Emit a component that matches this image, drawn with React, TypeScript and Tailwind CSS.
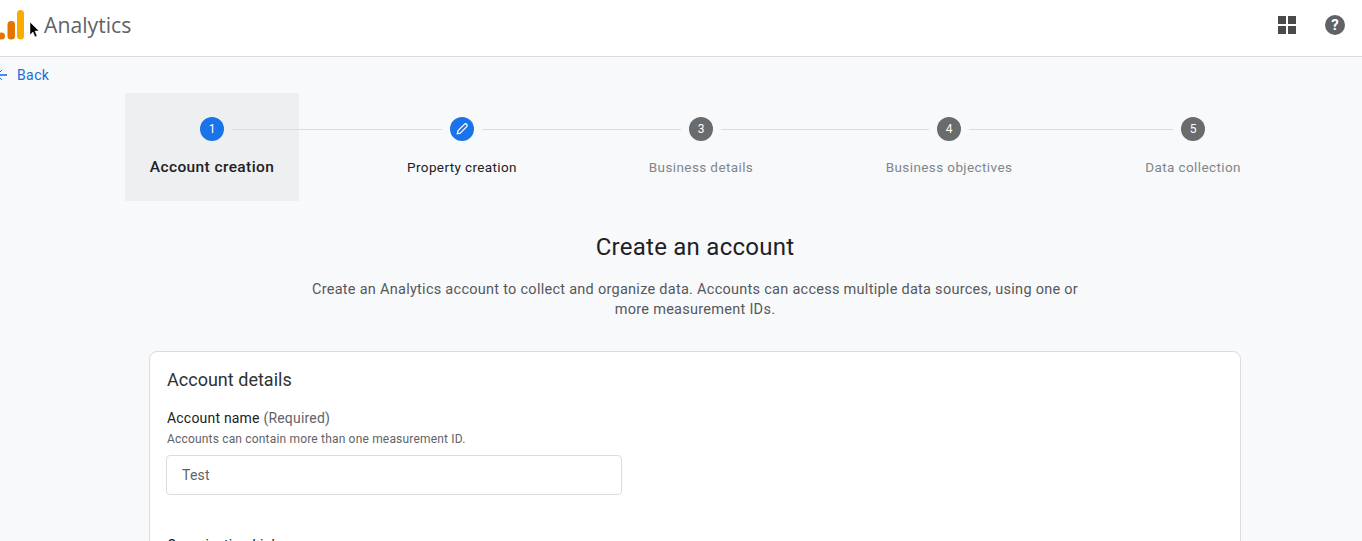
import type { ReactNode } from "react";

function Step({ mark, label, kind, w }: { mark: ReactNode; label: string; kind: "active" | "edit" | "todo"; w: string }) {
  const labelClass =
    kind === "active"
      ? "text-[15.5px] font-medium text-[#202124] tracking-[0.4px]"
      : kind === "edit"
        ? "text-[13.5px] text-[#202124] tracking-[0.38px]"
        : "text-[13.5px] text-[#80868b] tracking-[0.4px]";
  return (
    <div className={`${w} relative z-0 flex flex-col items-center shrink-0 pt-6 h-[108px] ${kind === "active" ? "bg-[#eeeff1]" : ""}`}>
      <div className={`w-6 h-6 rounded-full flex items-center justify-center text-xs text-white ${kind === "todo" ? "bg-[#6a6b6d]" : "bg-[#1a73e8]"}`}>{mark}</div>
      <div className={`mt-[16px] leading-5 whitespace-nowrap ${labelClass}`}>{label}</div>
    </div>
  );
}

function Line({ w, extra = "" }: { w: string; extra?: string }) {
  return <div className={`${w} ${extra} relative z-10 h-px bg-[#dadce0] mt-9 shrink-0`} />;
}

export default function App() {
  return (
    <div className="h-[541px] overflow-hidden bg-[#f8f9fb] font-['Roboto',sans-serif]">
      <header className="h-[57px] bg-white border-b border-[#dadce0] flex items-center pb-[6px]">
        <svg width="24" height="30" viewBox="0 0 24 30" className="shrink-0">
          <rect x="17" y="0" width="7" height="29.5" rx="3.5" fill="#f9ab00" />
          <rect x="7.5" y="11" width="7.5" height="18.5" rx="3.5" fill="#e37400" />
          <circle cx="1.5" cy="26" r="3.5" fill="#e37400" />
        </svg>
        <svg width="14" height="18" viewBox="0 0 14 18" className="ml-[5px] mt-[10px] shrink-0">
          <path d="M1 1v13l3-3 2 5 2-1-2-5h4z" fill="#000" stroke="#fff" strokeWidth="0.5" />
        </svg>
        <span className="ml-[1px] text-[21.2px] text-[#5f6368] font-['Open_Sans',sans-serif]">Analytics</span>
        <div className="ml-auto mr-[17px] flex items-center gap-[29px]">
          <div className="grid grid-cols-2 gap-[2px]">
            <span className="w-2 h-2 bg-[#4a4a4a]" />
            <span className="w-2 h-2 bg-[#4a4a4a]" />
            <span className="w-2 h-2 bg-[#4a4a4a]" />
            <span className="w-2 h-2 bg-[#4a4a4a]" />
          </div>
          <div className="w-5 h-5 rounded-full bg-[#5f6368] text-white text-[15px] font-bold flex items-center justify-center">?</div>
        </div>
      </header>

      <div className="h-9 flex items-center text-[#1a6cd6] text-sm">
        <svg width="7" height="10" viewBox="0 0 7 10" className="shrink-0">
          <path d="M0 5h7" stroke="#1a73e8" strokeWidth="1.6" fill="none" />
          <path d="M0 2 L2 0M0 8 L2 10" stroke="#1a73e8" strokeWidth="1" fill="none" />
        </svg>
        <span className="ml-[10px] tracking-[0.4px]">Back</span>
      </div>

      <div className="flex pl-[125px]">
        <Step mark="1" label="Account creation" kind="active" w="w-[174px]" />
        <Line w="w-[210px]" extra="-ml-[67px]" />
        <Step
          mark={
            <svg width="14" height="14" viewBox="0 0 24 24" fill="none" stroke="#fff" strokeWidth="2.2">
              <path d="M4 20l1-5L16 4a2.1 2.1 0 0 1 4 4L9 19z" />
            </svg>
          }
          label="Property creation"
          kind="edit"
          w="w-10"
        />
        <Line w="w-[199px]" />
        <Step mark="3" label="Business details" kind="todo" w="w-10" />
        <Line w="w-[208px]" />
        <Step mark="4" label="Business objectives" kind="todo" w="w-10" />
        <Line w="w-[204px]" />
        <Step mark="5" label="Data collection" kind="todo" w="w-10" />
      </div>

      <div className="ml-[149px] w-[1092px]">
        <h1 className="mt-[30px] text-center text-[24px] leading-8 tracking-[0.25px] text-[#202124]">Create an account</h1>
        <p className="mx-auto mt-[17px] w-[790px] text-center text-[14.5px] leading-5 tracking-[0.27px] text-[#55585c]">
          Create an Analytics account to collect and organize data. Accounts can access multiple data sources, using one or more measurement IDs.
        </p>
        <section className="mt-[31px] h-[300px] rounded-lg border border-[#dadce0] bg-white pl-[17px] pt-[16px]">
          <h2 className="text-[18px] leading-6 text-[#303134] tracking-[0.02px]">Account details</h2>
          <div className="mt-[16px] text-sm leading-5 tracking-[0.2px] text-[#202124]">
            Account name <span className="text-[#5f6368]">(Required)</span>
          </div>
          <div className="mt-[3px] text-[12px] leading-4 tracking-[0.18px] text-[#5f6368]">Accounts can contain more than one measurement ID.</div>
          <div className="mt-[8px] -ml-px h-10 w-[456px] rounded border border-[#dadce0] flex items-center pl-[15px] text-sm tracking-[0.2px] text-[#5f6368]">Test</div>
          <div className="mt-[40px] text-sm leading-5 tracking-[0.2px] text-[#202124]">Organization Link</div>
        </section>
      </div>
    </div>
  );
}
